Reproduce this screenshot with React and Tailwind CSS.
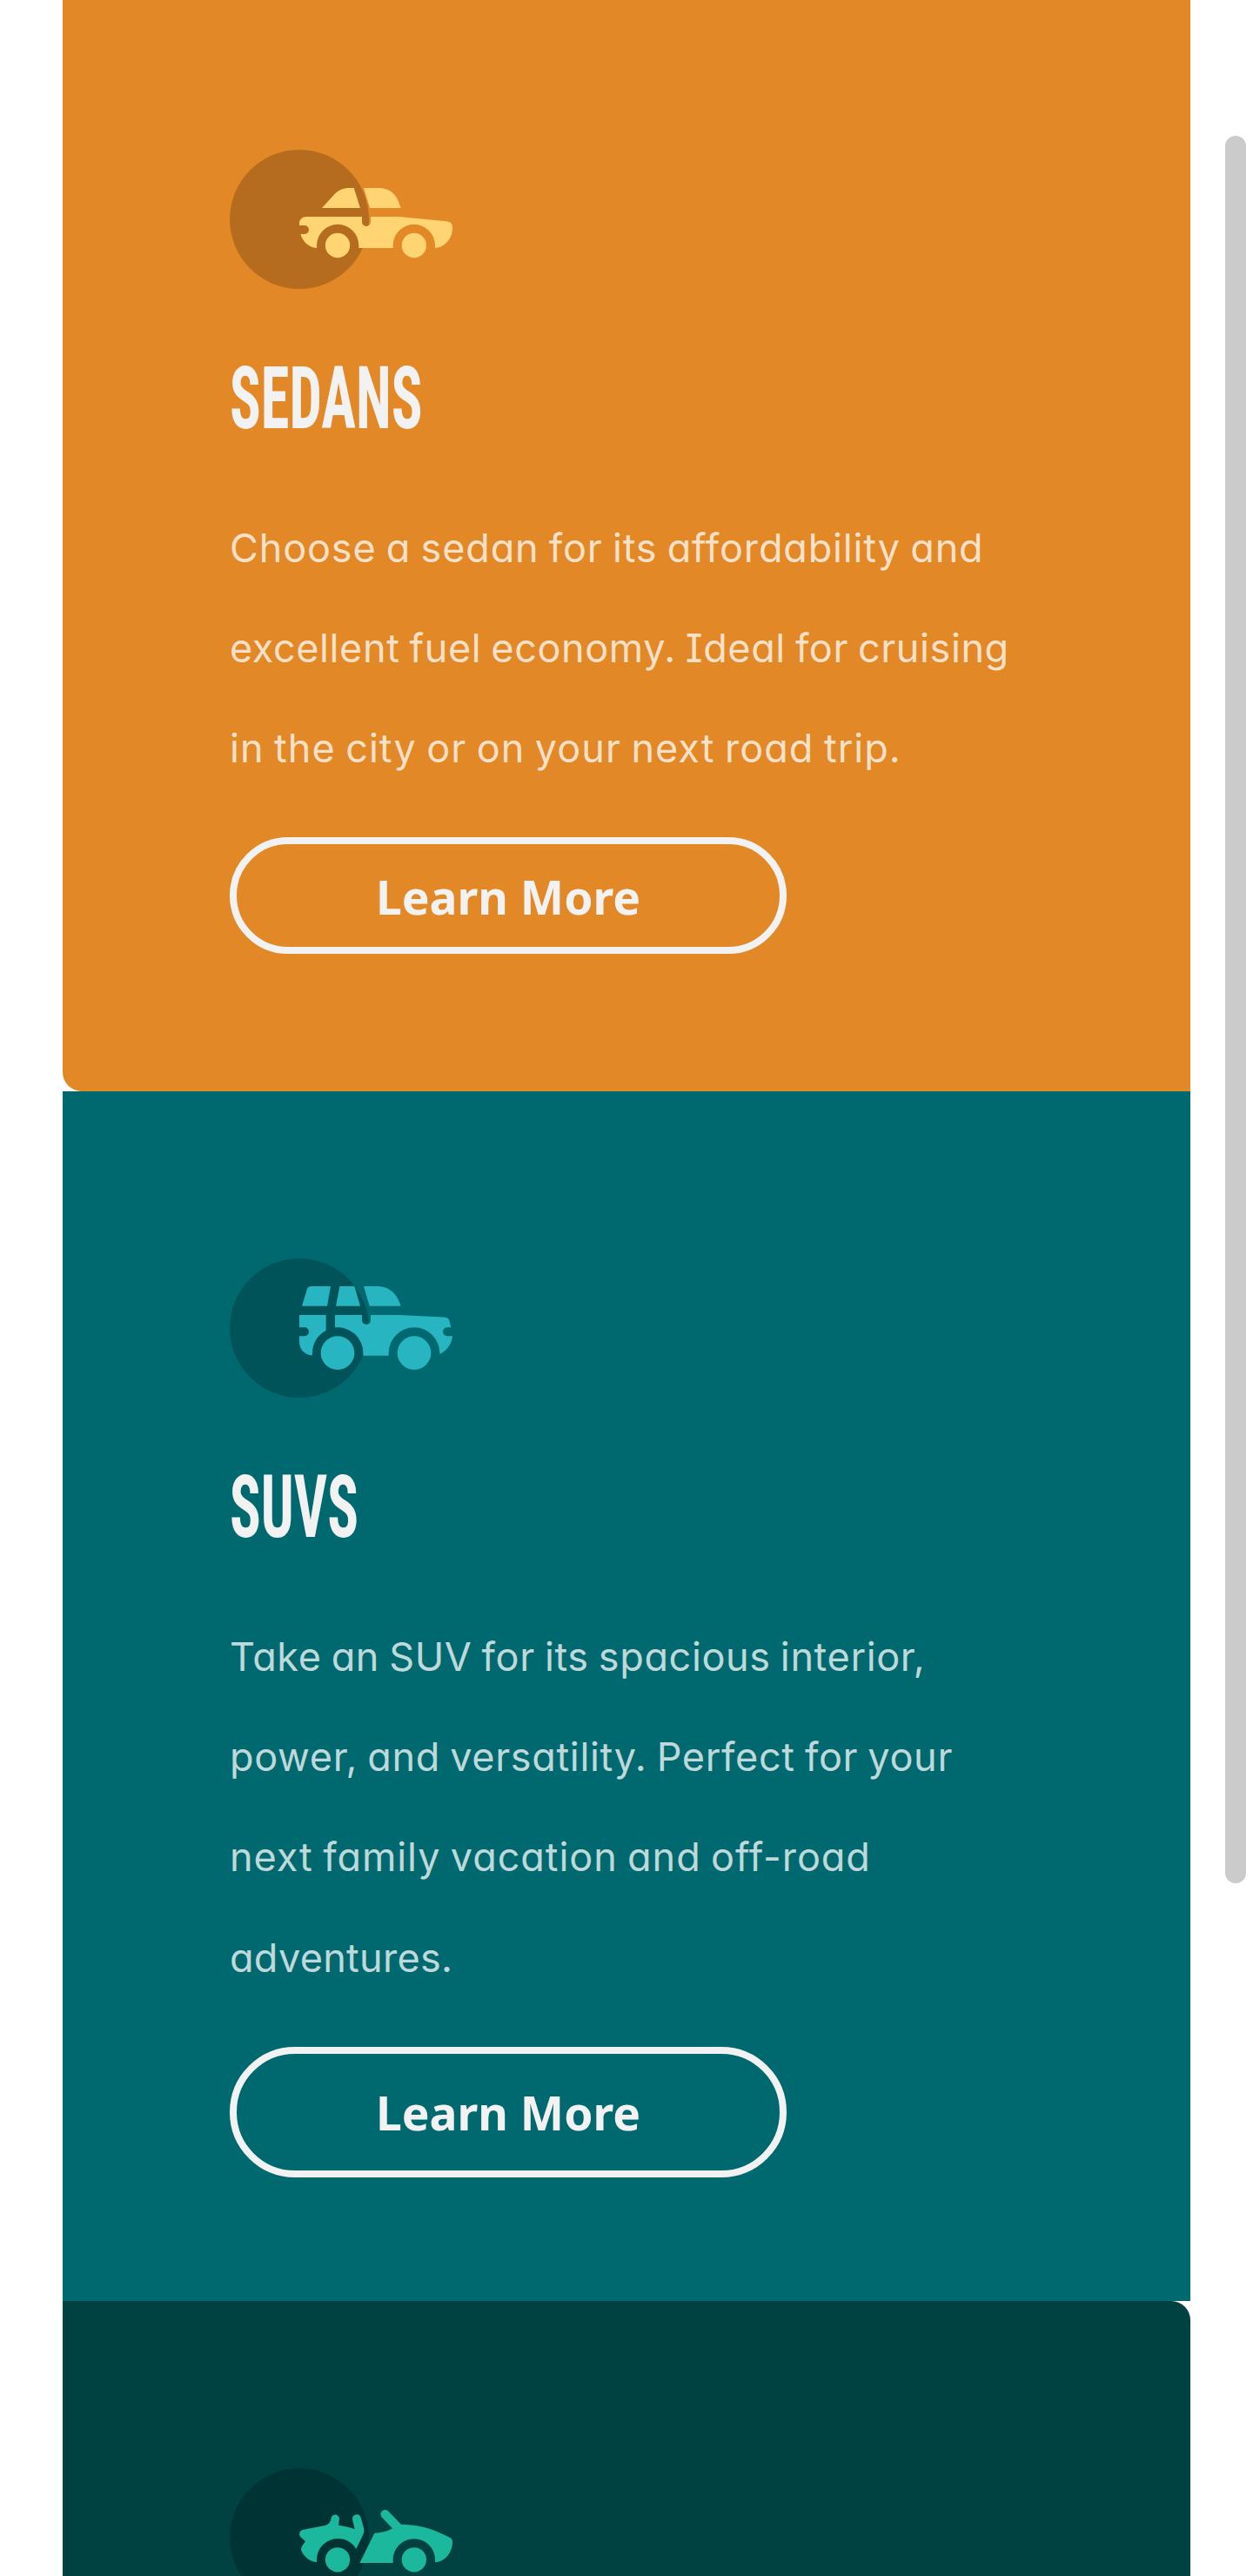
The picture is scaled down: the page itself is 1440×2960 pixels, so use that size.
import React from 'react';

function SedanIcon() {
  return (
    <svg viewBox="72 66 768 480" className="block h-[160px] w-[256px]">
      <circle cx="312" cy="306" r="240" fill="#000" fillOpacity=".2" />
      <g fill="#ffd473">
        <path d="M390 267 L433 220 C447 205 465 198 483 198 H500 L522 267 Z" />
        <path d="M534 198 H590 C622 199 643 220 652 240 L662 267 H555 Z" />
        <path d="M338 297 H528 V315 A15 15 0 0 0 558 315 V297 H655 L820 313 C833 315 840 322 840 333 V340 C838 375 812 403 780 405 V396 A72.5 72.5 0 0 0 635 396 V405 H517 V396 A72.5 72.5 0 0 0 372 396 V405 C345 403 325 385 316 357 H330 A15 15 0 0 0 330 327 H312 V320 C312 306 323 297 338 297 Z" />
        <circle cx="444" cy="396" r="42.5" />
        <circle cx="707.5" cy="396" r="42.5" />
      </g>
    </svg>
  );
}

function SuvIcon() {
  return (
    <svg viewBox="72 48 768 480" className="block h-[160px] w-[256px]">
      <circle cx="312" cy="288" r="240" fill="#000" fillOpacity=".2" />
      <g fill="#27b5c2">
        <path d="M338 155 C341 147 346 144 354 144 H420 L408 212 H321 Z" />
        <path d="M451 144 H502 L522 212 H438 Z" />
        <path d="M534 144 H583 C620 144 650 170 662 212 H554 Z" />
        <path d="M312 243 H404 V296 C375 312 357 340 357 374 V382 C332 382 312 362 312 335 V316 H330 A15 15 0 0 0 330 286 H312 Z" />
        <path d="M435 243 H528 V261 A15 15 0 0 0 558 261 V243 H655 L815 251 C824 252 828 256 829 262 L835 286 H822 A15 15 0 0 0 822 316 H840 C838 343 820 367 796 378 V374 A88 88 0 0 0 620 374 V383 H532 V374 A88 88 0 0 0 435 286 Z" />
        <circle cx="444" cy="374" r="58" />
        <circle cx="708" cy="374" r="58" />
      </g>
    </svg>
  );
}

function LuxuryIcon() {
  return (
    <svg viewBox="72 78 768 480" className="block h-[160px] w-[256px]">
      <circle cx="312" cy="318" r="240" fill="#000" fillOpacity=".2" />
      <g fill="#1bb89e">
        <path d="M326 290 L400 276 C412 273 419 265 421 254 A14.5 14.5 0 0 1 450 252 L447 275 C467 277 487 282 503 288 L495 255 A15 15 0 0 1 524 248 L535 288 C536 297 533 305 530 311 L508 357 C496 335 472 321 444 321 A72.5 72.5 0 0 0 372 394 V403 C350 401 328 385 319 363 C317 355 319 350 323 344 L333 331 L316 315 C309 306 312 293 326 290 Z" />
        <path d="M520 405 L571 302 C592 302 614 297 633 286 L597 248 A15 15 0 0 1 618 226 L663 272 C720 272 770 285 833 319 C839 323 840 327 840 335 C838 373 812 401 780 403 V394 A72.5 72.5 0 0 0 635 394 V405 Z" />
        <circle cx="444" cy="394" r="42.5" />
        <circle cx="707.5" cy="394" r="42.5" />
      </g>
    </svg>
  );
}

const cards = [
  {
    title: 'SEDANS',
    Icon: SedanIcon,
    box: 'h-[1254px] rounded-bl-[22px] bg-[#e38826]',
    pad: 'pt-[172px]',
    button: 'h-[133.6px]',
    lines: [
      ['Choose a sedan for its affordability and', 'tracking-[0.85px]'],
      ['excellent fuel economy. Ideal for cruising', 'tracking-[0.6px]'],
      ['in the city or on your next road trip.', 'tracking-[1.03px]'],
    ],
  },
  {
    title: 'SUVS',
    Icon: SuvIcon,
    box: 'h-[1390px] bg-[#006970]',
    pad: 'pt-[192px]',
    button: 'h-[150.8px]',
    lines: [
      ['Take an SUV for its spacious interior,', 'tracking-[0.64px]'],
      ['power, and versatility. Perfect for your', 'tracking-[0.68px]'],
      ['next family vacation and off-road', 'tracking-[0.94px]'],
      ['adventures.', 'tracking-[0.3px]'],
    ],
  },
  {
    title: 'LUXURY',
    Icon: LuxuryIcon,
    box: 'h-[1390px] rounded-tr-[22px] bg-[#004241]',
    pad: 'pt-[192px]',
    button: 'h-[150.8px]',
    lines: null,
  },
];

function Card({ title, Icon, box, pad, button, lines }) {
  return (
    <section className={`shrink-0 px-[192px] ${box} ${pad}`}>
      <Icon />
      {lines && (
        <>
          <h2 className="mt-[76px] h-[100px] w-max origin-left scale-x-[0.658] font-[Roboto,sans-serif] text-[101px] leading-[100px] font-bold text-[#f2f2f2] [font-stretch:75%]">
            {title}
          </h2>
          <p className="mt-[64px] font-[Inter,sans-serif] text-[45px] leading-[115.2px] font-[430] whitespace-nowrap text-white/75 [font-feature-settings:'cv08','cv11'] [word-spacing:-2.2px]">
            {lines.map(([text, tracking]) => (
              <span key={text} className={`block ${tracking}`}>
                {text}
              </span>
            ))}
          </p>
          <button
            className={`mt-[44.8px] flex w-[640px] items-center justify-center rounded-full border-8 border-[#f2f2f2] pt-[2px] font-['Noto_Sans',sans-serif] text-[53.333px] leading-none font-bold text-[#f2f2f2] ${button}`}
          >
            Learn More
          </button>
        </>
      )}
    </section>
  );
}

export default function App() {
  return (
    <div className="flex h-[2960px] justify-between overflow-hidden bg-white pr-2 pl-[72px]">
      <main className="flex w-[1296px] flex-col">
        {cards.map((card) => (
          <Card key={card.title} {...card} />
        ))}
      </main>
      <div className="mt-[156px] h-[2008px] w-6 rounded-full bg-[#cbcbcb]" />
    </div>
  );
}
